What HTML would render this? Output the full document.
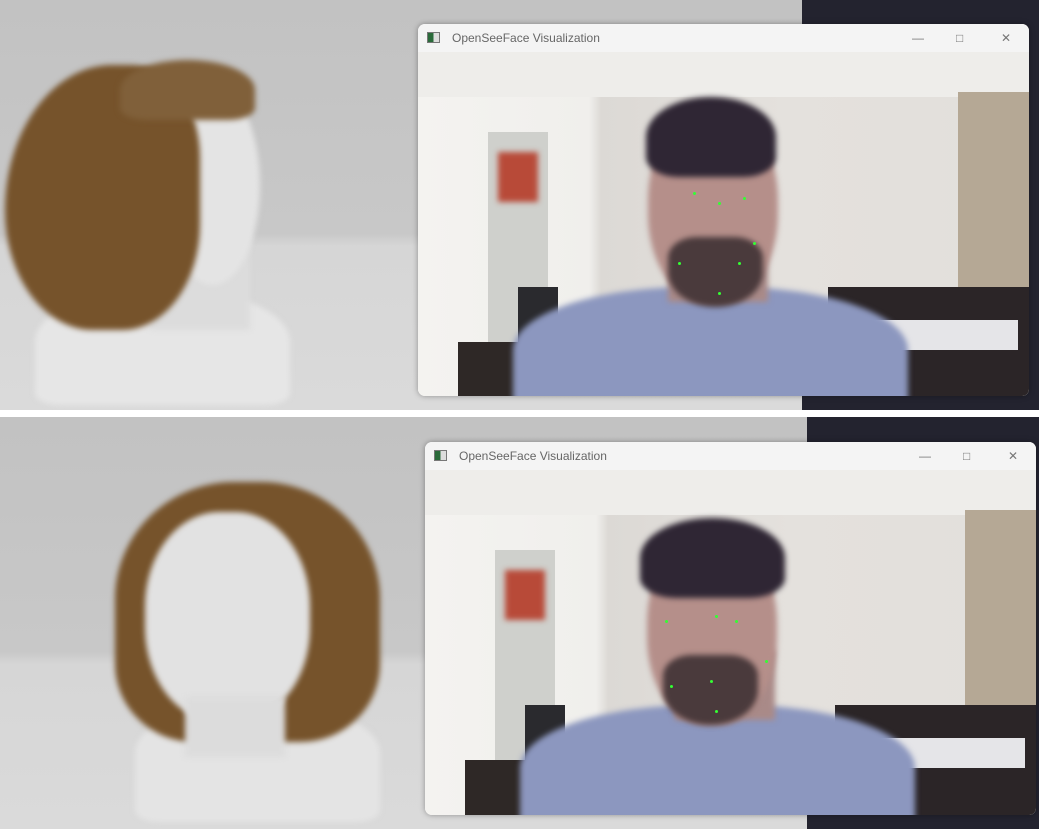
<!DOCTYPE html>
<html><head><meta charset="utf-8"><style>
*{margin:0;padding:0;box-sizing:border-box}
body{width:1039px;height:829px;overflow:hidden;background:#fff;position:relative;font-family:"Liberation Sans",sans-serif}
.a{position:absolute}
.panel{position:absolute;left:0;width:1039px;overflow:hidden}
.bg{background:linear-gradient(#c2c2c2 0,#c8c8c8 57%,#d6d6d6 60%,#dadada 100%)}
.win{position:absolute;width:611px;border-radius:7px;overflow:hidden;background:#f3f3f3;box-shadow:0 0 6px rgba(0,0,0,.35)}
.tb{height:28px;position:relative;background:#f4f4f4;font-size:12px;color:#666;line-height:28px;padding-left:34px}
.ic{position:absolute;left:9px;top:8px;width:13px;height:11px;border:1px solid #777;background:linear-gradient(90deg,#2a6a3a 50%,#ddd 50%)}
.ctl{position:absolute;top:0;font-size:12px;color:#777}
.cam{position:relative;height:345px;overflow:hidden;background:linear-gradient(90deg,#f4f3f0 0,#f0efec 28%,#dcd9d5 30%,#e4e1dd 60%,#e2dfdb 100%)}
.blur{filter:blur(3px)}
.dot{position:absolute;width:3px;height:3px;background:#3f3;border-radius:50%}
</style></head><body>

<div class="panel bg" style="top:0;height:410px">
  <div class="a" style="left:802px;top:0;width:237px;height:410px;background:#23232f"></div>
  <div class="a blur" style="left:35px;top:290px;width:255px;height:115px;border-radius:45% 45% 10% 10%;background:#e6e6e6"></div>
  <div class="a blur" style="left:150px;top:230px;width:100px;height:100px;background:#dcdcdc"></div>
  <div class="a blur" style="left:165px;top:85px;width:95px;height:200px;border-radius:50%;background:#e4e4e4"></div>
  <div class="a blur" style="left:5px;top:65px;width:195px;height:265px;border-radius:55% 35% 40% 45%;background:#76532b"></div>
  <div class="a blur" style="left:120px;top:60px;width:135px;height:60px;border-radius:50% 50% 20% 20%;background:#80603a"></div>
  <div class="win" style="left:418px;top:24px;height:372px">
    <div class="tb"><div class="ic"></div>OpenSeeFace Visualization
      <span class="ctl" style="left:494px">&#8212;</span><span class="ctl" style="left:538px">&#9633;</span><span class="ctl" style="left:583px">&#10005;</span></div>
    <div class="cam">
      <div class="a" style="left:0;top:0;width:611px;height:45px;background:#eeedea"></div>
      <div class="a" style="left:540px;top:40px;width:71px;height:270px;background:#b5a895" ></div>
      <div class="a" style="left:70px;top:80px;width:60px;height:240px;background:#cfd0cc"></div>
      <div class="a blur" style="left:80px;top:100px;width:40px;height:50px;background:#b84a38"></div>
      <div class="a" style="left:40px;top:290px;width:140px;height:55px;background:#2e2826"></div>
      <div class="a" style="left:100px;top:235px;width:40px;height:55px;background:#2a2a2e"></div>
      <div class="a" style="left:410px;top:235px;width:201px;height:110px;background:#2b2527"></div>
      <div class="a" style="left:450px;top:268px;width:150px;height:30px;background:#e5e5e8"></div>
      <div class="a blur" style="left:95px;top:235px;width:395px;height:140px;border-radius:45% 45% 0 0;background:#8c97bf"></div>
      <div class="a blur" style="left:250px;top:180px;width:100px;height:70px;background:#a98a88"></div>
      <div class="a blur" style="left:230px;top:55px;width:130px;height:195px;border-radius:48% 48% 45% 45%;background:#b58f8a"></div>
      <div class="a blur" style="left:228px;top:45px;width:130px;height:80px;border-radius:50% 50% 25% 25%;background:#2f2634"></div>
      <div class="a blur" style="left:250px;top:185px;width:95px;height:70px;border-radius:30% 30% 50% 50%;background:#4a3a3c"></div>
      <div class="dot" style="left:275px;top:140px"></div><div class="dot" style="left:300px;top:150px"></div><div class="dot" style="left:325px;top:145px"></div><div class="dot" style="left:335px;top:190px"></div><div class="dot" style="left:320px;top:210px"></div><div class="dot" style="left:300px;top:240px"></div><div class="dot" style="left:260px;top:210px"></div>
    </div>
  </div>
</div>

<div class="panel bg" style="top:417px;height:412px">
  <div class="a" style="left:807px;top:0;width:232px;height:412px;background:#23232f"></div>
  <div class="a blur" style="left:135px;top:290px;width:245px;height:115px;border-radius:40% 40% 10% 10%;background:#e4e4e4"></div>
  <div class="a blur" style="left:115px;top:65px;width:265px;height:260px;border-radius:45% 45% 30% 30%;background:#76532b"></div>
  <div class="a blur" style="left:145px;top:95px;width:165px;height:210px;border-radius:45%;background:#e2e2e2"></div>
  <div class="a blur" style="left:185px;top:280px;width:100px;height:60px;background:#dcdcdc"></div>
  <div class="win" style="left:425px;top:25px;height:373px">
    <div class="tb"><div class="ic"></div>OpenSeeFace Visualization
      <span class="ctl" style="left:494px">&#8212;</span><span class="ctl" style="left:538px">&#9633;</span><span class="ctl" style="left:583px">&#10005;</span></div>
    <div class="cam">
      <div class="a" style="left:0;top:0;width:611px;height:45px;background:#eeedea"></div>
      <div class="a" style="left:540px;top:40px;width:71px;height:270px;background:#b5a895"></div>
      <div class="a" style="left:70px;top:80px;width:60px;height:240px;background:#cfd0cc"></div>
      <div class="a blur" style="left:80px;top:100px;width:40px;height:50px;background:#b84a38"></div>
      <div class="a" style="left:40px;top:290px;width:140px;height:55px;background:#2e2826"></div>
      <div class="a" style="left:100px;top:235px;width:40px;height:55px;background:#2a2a2e"></div>
      <div class="a" style="left:410px;top:235px;width:201px;height:110px;background:#2b2527"></div>
      <div class="a" style="left:450px;top:268px;width:150px;height:30px;background:#e5e5e8"></div>
      <div class="a blur" style="left:95px;top:235px;width:395px;height:140px;border-radius:45% 45% 0 0;background:#8c97bf"></div>
      <div class="a blur" style="left:250px;top:180px;width:100px;height:70px;background:#a98a88"></div>
      <div class="a blur" style="left:222px;top:60px;width:130px;height:195px;border-radius:48% 48% 45% 45%;background:#b58f8a"></div>
      <div class="a blur" style="left:215px;top:48px;width:145px;height:80px;border-radius:50% 50% 25% 25%;background:#2f2634"></div>
      <div class="a blur" style="left:238px;top:185px;width:95px;height:70px;border-radius:30% 30% 50% 50%;background:#4a3a3c"></div>
      <div class="dot" style="left:240px;top:150px"></div><div class="dot" style="left:290px;top:145px"></div><div class="dot" style="left:310px;top:150px"></div><div class="dot" style="left:340px;top:190px"></div><div class="dot" style="left:285px;top:210px"></div><div class="dot" style="left:290px;top:240px"></div><div class="dot" style="left:245px;top:215px"></div>
    </div>
  </div>
</div>
</body></html>
